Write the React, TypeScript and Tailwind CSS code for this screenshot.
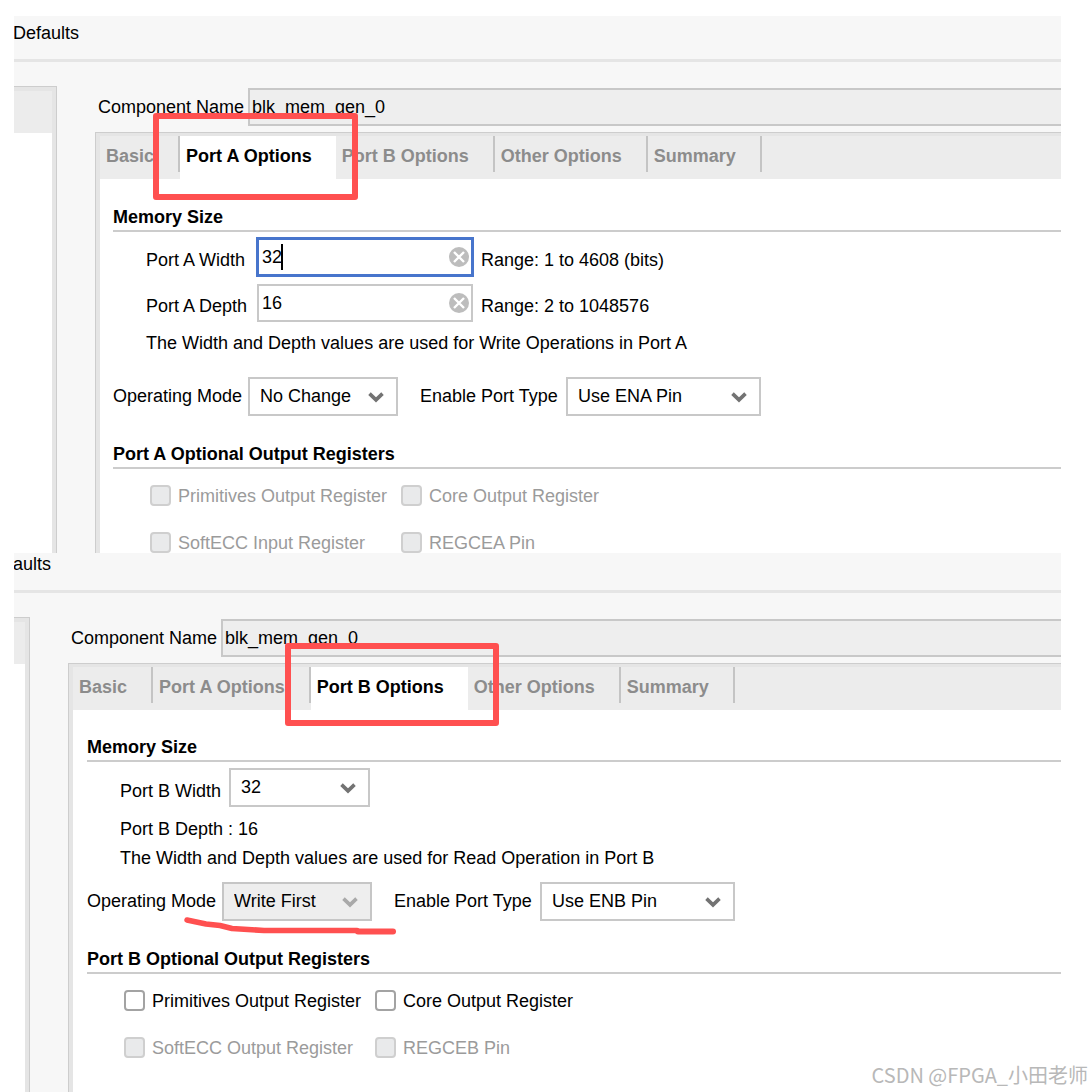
import type { ReactNode } from 'react';

const SELECT_BASE = 'h-[39px] w-full appearance-none border-2 pb-[2px] pl-[10px] pr-10 text-black opacity-100 outline-none';

function Chevron({ muted }: { muted?: boolean }) {
  return (
    <svg
      className={`pointer-events-none absolute top-[15px] right-[14px] ${muted ? 'text-[#a9a9a9]' : 'text-[#737373]'}`}
      width="16"
      height="11"
      viewBox="0 0 16 11"
      fill="none"
      stroke="currentColor"
      strokeWidth="3.6"
    >
      <path d="M1.5 1.6 L8 7.9 L14.5 1.6" />
    </svg>
  );
}

function Select({ id, value, width, disabled }: { id: string; value: string; width: string; disabled?: boolean }) {
  return (
    <div className={`relative shrink-0 ${width}`}>
      <select
        id={id}
        disabled={disabled}
        className={`${SELECT_BASE} ${disabled ? 'border-[#c6c6c6] bg-[#eeeeee]' : 'border-[#c8c8c8] bg-white'}`}
      >
        <option>{value}</option>
      </select>
      <Chevron muted={disabled} />
    </div>
  );
}

function NumberField({ id, label, value, hint, active }: { id: string; label: string; value: string; hint: string; active?: boolean }) {
  return (
    <div className="flex">
      <label htmlFor={id} className="w-[111px] shrink-0 pt-[11px]">{label}</label>
      <div className="relative w-[216px] shrink-0">
        <input
          id={id}
          defaultValue={value}
          className={`block h-[38px] w-full border-2 bg-white pr-8 pl-[3px] outline-none ${active ? 'border-[#4775cc] ring-1 ring-[#4775cc]' : 'border-[#c8c8c8]'}`}
        />
        {active && <span className="absolute top-[6px] left-6 h-[26px] w-[2px] bg-black" />}
        <button type="button" aria-label={`Clear ${label}`} className="absolute top-[9px] right-1">
          <svg width="20" height="20" viewBox="0 0 20 20">
            <circle cx="10" cy="10" r="10" fill="#bdbdbd" />
            <path d="M5 5 L15 15 M15 5 L5 15" stroke="#fff" strokeWidth="2.4" />
          </svg>
        </button>
      </div>
      <span className="pt-[11px] pl-2">{hint}</span>
    </div>
  );
}

function Heading({ children }: { children: ReactNode }) {
  return <h2 className="border-b-2 border-[#cccccc] pt-px pb-[2px] font-bold">{children}</h2>;
}

function Check({ label, disabled }: { label: string; disabled?: boolean }) {
  return (
    <label className={`flex h-[21px] items-center gap-[7px] whitespace-nowrap ${disabled ? 'text-[#9b9b9b]' : ''}`}>
      <input
        type="checkbox"
        disabled={disabled}
        className={`size-[21px] shrink-0 appearance-none rounded-[4px] border-2 ${disabled ? 'border-[#cfcfcf] bg-[#e9eaeb]' : 'border-[#a3a3a3] bg-white'}`}
      />
      {label}
    </label>
  );
}

function Tabs({ active }: { active: string }) {
  const tabs = ['Basic', 'Port A Options', 'Port B Options', 'Other Options', 'Summary'];
  return (
    <div role="tablist" className="flex h-[43px] bg-[#ececec]">
      {tabs.map(tab => (
        <div key={tab} className={`flex ${tab === active ? 'bg-white' : ''}`}>
          <button
            type="button"
            role="tab"
            aria-selected={tab === active}
            className={`pr-6 pb-1 pl-[6px] font-bold whitespace-nowrap ${tab === active ? 'text-black' : 'text-[#8c8c8c]'}`}
          >
            {tab}
          </button>
          {tab !== active && <span className="h-9 w-[2px] bg-[#c4c4c4]" />}
        </div>
      ))}
    </div>
  );
}

type PanelProps = {
  id: string;
  title: string;
  className?: string;
  headerClass: string;
  sidebarClass: string;
  activeTab: string;
  children: ReactNode;
  marks: ReactNode;
};

function Panel({ id, title, className = '', headerClass, sidebarClass, activeTab, children, marks }: PanelProps) {
  return (
    <section className={`relative flex flex-col overflow-hidden bg-[#f7f7f7] ${className}`}>
      <header className={`border-b-[3px] border-[#e5e5e5] pb-[15px] ${headerClass}`}>{title}</header>
      <div className="flex flex-1 gap-[38px] pt-6">
        <aside className={`flex shrink-0 border-t border-r border-[#cdcdcd] ${sidebarClass}`}>
          <div className="flex-1 border-t-4 border-r-4 border-[#e5e5e5] bg-white">
            <div className="h-[42px] bg-[#ececec]" />
          </div>
        </aside>
        <main className="flex min-w-0 flex-1 flex-col pt-[2px]">
          <div className="flex items-center pl-[3px]">
            <label htmlFor={id} className="w-[150px] shrink-0">Component Name</label>
            <input
              id={id}
              readOnly
              value="blk_mem_gen_0"
              className="h-[38px] min-w-0 flex-1 border-2 border-r-0 border-[#c8c8c8] bg-[#eeeeee] pl-[2px] outline-none"
            />
          </div>
          <div className="mt-[6px] flex flex-1 flex-col border-t border-l border-[#cdcdcd]">
            <div className="flex-1 border-t-[3px] border-l-4 border-[#e5e5e5] bg-white">
              <Tabs active={activeTab} />
              {children}
            </div>
          </div>
        </main>
      </div>
      {marks}
    </section>
  );
}

export default function App() {
  return (
    <div
      className="relative flex min-h-screen flex-col bg-white pt-4 pr-[31px] pl-[14px] text-[18px] leading-[22px] text-black"
      style={{ fontFamily: '"Liberation Sans", Arial, sans-serif' }}
    >
      <Panel
        id="name-a"
        title="Defaults"
        headerClass="pt-[6px] -indent-[1px]"
        sidebarClass="w-[43px]"
        activeTab="Port A Options"
        marks={<div className="absolute top-[97px] left-[139px] h-[87px] w-[205px] rounded-[3px] border-[6px] border-[#ff5050]" />}
      >
        <div className="pt-[26px] pl-[13px]">
          <Heading>Memory Size</Heading>
          <div className="mt-[6px] flex flex-col gap-2 pl-[33px]">
            <NumberField id="a-width" label="Port A Width" value="32" hint="Range: 1 to 4608 (bits)" active />
            <NumberField id="a-depth" label="Port A Depth" value="16" hint="Range: 2 to 1048576" />
          </div>
          <p className="mt-[10px] pl-[33px]">The Width and Depth values are used for Write Operations in Port A</p>
          <div className="mt-[23px] mb-[26px] flex items-center">
            <label htmlFor="a-mode" className="w-[135px] shrink-0 pb-[2px]">Operating Mode</label>
            <Select id="a-mode" value="No Change" width="w-[150px]" />
            <label htmlFor="a-enable" className="ml-[22px] w-[146px] shrink-0 pb-[2px]">Enable Port Type</label>
            <Select id="a-enable" value="Use ENA Pin" width="w-[195px]" />
          </div>
          <Heading>Port A Optional Output Registers</Heading>
          <div className="mt-4 grid grid-cols-[251px_1fr] gap-y-[26px] pl-[37px]">
            <Check label="Primitives Output Register" disabled />
            <Check label="Core Output Register" disabled />
            <Check label="SoftECC Input Register" disabled />
            <Check label="REGCEA Pin" disabled />
          </div>
        </div>
      </Panel>

      <Panel
        id="name-b"
        title="aults"
        className="flex-1"
        headerClass="-indent-[1px]"
        sidebarClass="w-4"
        activeTab="Port B Options"
        marks={
          <>
            <div className="absolute top-[90px] left-[271px] h-[83px] w-[214px] rounded-[3px] border-[6px] border-[#ff5050]" />
            <svg className="absolute top-[360px] left-[168px]" width="220" height="28" viewBox="0 0 220 28" fill="none" stroke="#ff5050" strokeLinecap="round" strokeLinejoin="round">
              <path d="M5 7 L12 8.5 L24 11 L38 12.5 L50 15.5 L66 16.5 L82 17.5 L175 17.5" strokeWidth="5.5" />
              <path d="M176 18.5 L211 18.5" strokeWidth="6" />
            </svg>
          </>
        }
      >
        <div className="pt-[25px] pl-[14px]">
          <Heading>Memory Size</Heading>
          <div className="mt-[6px] flex pl-[33px]">
            <label htmlFor="b-width" className="w-[109px] shrink-0 pt-3">Port B Width</label>
            <Select id="b-width" value="32" width="w-[141px]" />
          </div>
          <p className="mt-[11px] pl-[33px]">Port B Depth : 16</p>
          <p className="mt-[7px] pl-[33px]">The Width and Depth values are used for Read Operation in Port B</p>
          <div className="mt-[13px] mb-[26px] flex items-center">
            <label htmlFor="b-mode" className="w-[135px] shrink-0 pb-[2px]">Operating Mode</label>
            <Select id="b-mode" value="Write First" width="w-[150px]" disabled />
            <label htmlFor="b-enable" className="ml-[22px] w-[146px] shrink-0 pb-[2px]">Enable Port Type</label>
            <Select id="b-enable" value="Use ENB Pin" width="w-[195px]" />
          </div>
          <Heading>Port B Optional Output Registers</Heading>
          <div className="mt-4 grid grid-cols-[251px_1fr] gap-y-[26px] pl-[37px]">
            <Check label="Primitives Output Register" />
            <Check label="Core Output Register" />
            <Check label="SoftECC Output Register" disabled />
            <Check label="REGCEB Pin" disabled />
          </div>
        </div>
      </Panel>

      <div
        className="absolute right-1 bottom-[5px] text-[20px] leading-6 text-[#b8b8b8]"
        style={{ fontFamily: '"Noto Sans CJK SC", sans-serif' }}
      >
        CSDN @FPGA_小田老师
      </div>
    </div>
  );
}
